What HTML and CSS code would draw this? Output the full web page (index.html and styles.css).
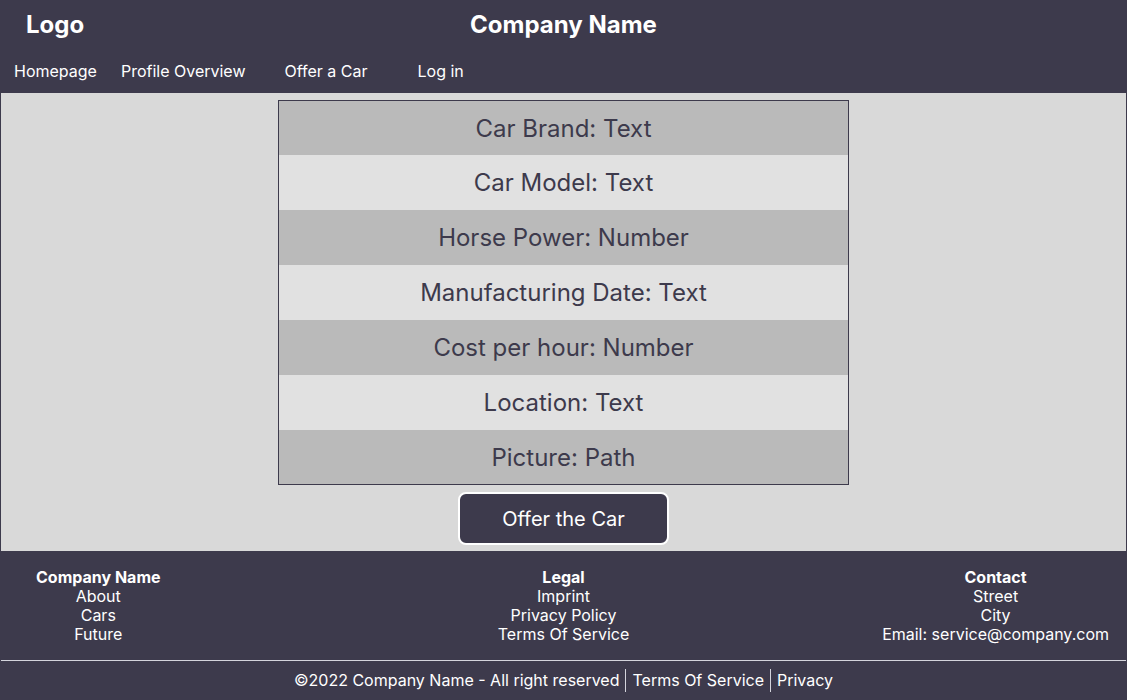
FILE: index.html
```html
<!DOCTYPE html>
<html lang="en">
<head>
<meta charset="utf-8">
<title>Offer a Car</title>
<link rel="stylesheet" href="styles.css">
</head>
<body>
<header class="site-header">
  <div class="title-row">
    <div class="logo">Logo</div>
    <div class="company">Company Name</div>
    <div class="spacer"></div>
  </div>
  <nav class="nav">
    <a class="nav-link nav-home" href="#">Homepage</a>
    <a class="nav-link nav-profile" href="#">Profile Overview</a>
    <a class="nav-link nav-offer" href="#">Offer a Car</a>
    <a class="nav-link nav-login" href="#">Log in</a>
  </nav>
</header>
<main class="main">
  <div class="car-table">
    <div class="row odd">Car Brand: Text</div>
    <div class="row even">Car Model: Text</div>
    <div class="row odd">Horse Power: Number</div>
    <div class="row even">Manufacturing Date: Text</div>
    <div class="row odd">Cost per hour: Number</div>
    <div class="row even">Location: Text</div>
    <div class="row odd">Picture: Path</div>
  </div>
  <button class="offer-btn" type="button">Offer the Car</button>
</main>
<footer class="footer">
  <div class="footer-cols">
    <div class="col col-left">
      <div class="col-title">Company Name</div>
      <div>About</div>
      <div>Cars</div>
      <div>Future</div>
    </div>
    <div class="col col-mid">
      <div class="col-title">Legal</div>
      <div>Imprint</div>
      <div>Privacy Policy</div>
      <div>Terms Of Service</div>
    </div>
    <div class="col col-right">
      <div class="col-title">Contact</div>
      <div>Street</div>
      <div>City</div>
      <div>Email: service@company.com</div>
    </div>
  </div>
  <hr class="footer-rule">
  <div class="copyright">
    <span class="seg">©2022 Company Name - All right reserved</span><span class="seg sep">Terms Of Service</span><span class="seg sep">Privacy</span>
  </div>
</footer>
</body>
</html>
```
FILE: styles.css
```css
* { box-sizing: border-box; }
html, body { margin: 0; padding: 0; }
body {
  background: #3d3a4c;
  font-family: Inter, "Noto Sans", sans-serif;
  color: #ffffff;
  width: 1127px;
  height: 700px;
  overflow: hidden;
}
.site-header { height: 93px; }
.title-row {
  display: grid;
  grid-template-columns: 1fr auto 1fr;
  align-items: center;
  height: 48px;
}
.logo {
  font-weight: 700;
  font-size: 24px;
  padding-left: 26px;
}
.company {
  font-weight: 700;
  font-size: 24px;
}
.nav {
  display: flex;
  align-items: center;
  height: 45px;
  padding-left: 14px;
}
.nav-link {
  color: #ffffff;
  text-decoration: none;
  font-size: 16px;
}
.nav-profile { margin-left: 24px; }
.nav-offer { margin-left: 39px; }
.nav-login { margin-left: 50px; }

.main {
  background: #d9d9d9;
  margin: 0 1px;
  height: 458px;
  display: flex;
  flex-direction: column;
  align-items: center;
  padding-top: 7px;
}
.car-table {
  width: 571px;
  border: 1px solid #3d3a4c;
}
.row {
  height: 55px;
  display: flex;
  align-items: center;
  justify-content: center;
  font-size: 24px;
  color: #3d3a4c;
}
.row.odd { background: #bababa; }
.row.even { background: #e1e1e1; }
.row:first-child { height: 54px; }
.row:last-child { height: 54px; }

.offer-btn {
  margin-top: 7px;
  width: 211px;
  height: 53px;
  background: #3d3a4c;
  border: 2px solid #ffffff;
  border-radius: 8px;
  color: #ffffff;
  font-family: Inter, "Noto Sans", sans-serif;
  font-size: 20px;
  padding: 0;
}

.footer { padding-top: 17px; }
.footer-cols {
  display: grid;
  grid-template-columns: 1fr auto 1fr;
  padding: 0 18px;
  font-size: 16px;
  line-height: 19px;
  text-align: center;
}
.col-left { justify-self: start; padding-left: 18px; }
.col-mid { justify-self: center; }
.col-right { justify-self: end; }
.col-title { font-weight: 700; }
.footer-rule {
  margin: 16px 1px 0;
  border: 0;
  height: 1px;
  background: #d4d4dc;
}
.copyright {
  display: flex;
  justify-content: center;
  align-items: center;
  height: 39px;
  font-size: 16px;
}
.seg { line-height: 19px; padding: 0 6px; }
.seg:first-child { padding-left: 0; }
.seg:last-child { padding-right: 0; }
.sep {
  border-left: 1px solid #d4d4dc;
  padding-top: 1px;
  padding-bottom: 2px;
  line-height: 20px;
}
```
